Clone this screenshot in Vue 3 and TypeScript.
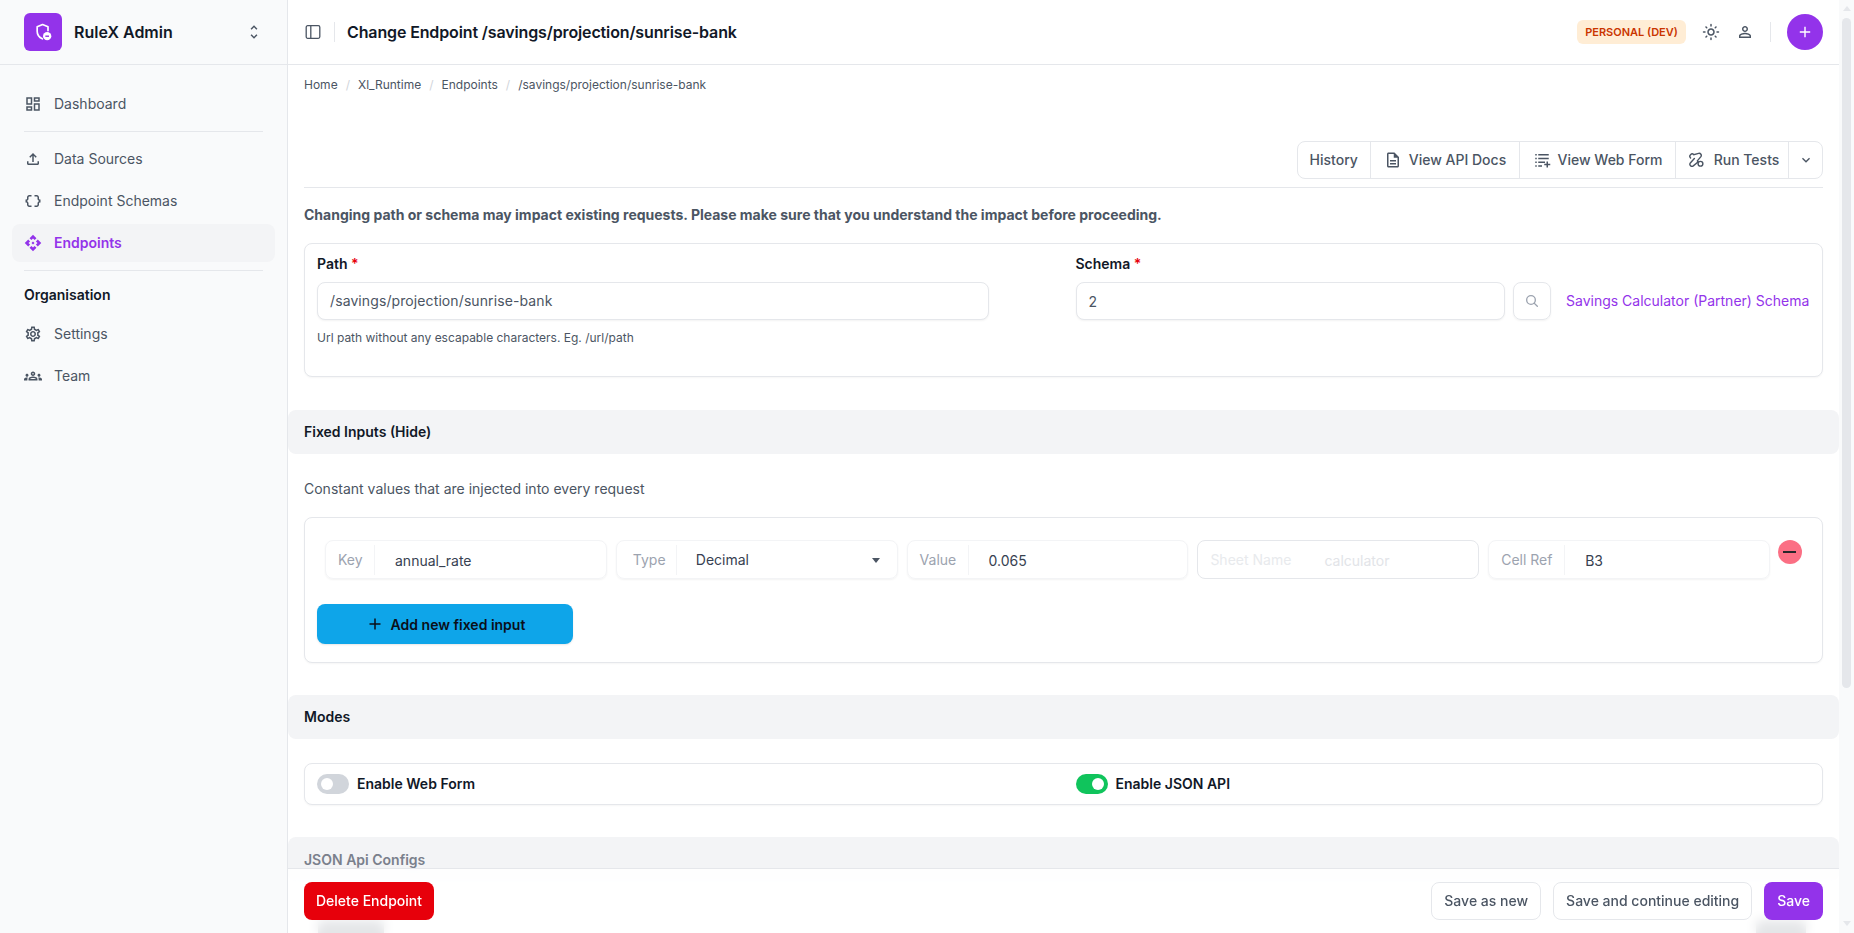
<script setup lang="ts">
interface NavItem { label: string; icon: string; active?: boolean }

const icons: Record<string, string> = {
  dashboard: 'M19 5v2h-4V5h4M9 5v6H5V5h4m10 8v6h-4v-6h4M9 17v2H5v-2h4M21 3h-8v6h8V3zM11 3H3v10h8V3zm10 8h-8v10h8V11zm-10 4H3v6h8v-6z',
  upload: 'M18 15v3H6v-3H4v3c0 1.1.9 2 2 2h12c1.1 0 2-.9 2-2v-3h-2zM7 9l1.41 1.41L11 7.83V16h2V7.83l2.59 2.58L17 9l-5-5-5 5z',
  braces: 'M4 7v2c0 .55-.45 1-1 1H2v4h1c.55 0 1 .45 1 1v2c0 1.65 1.35 3 3 3h3v-2H7c-.55 0-1-.45-1-1v-2c0-1.3-.84-2.42-2-2.83v-.34C5.16 11.42 6 10.3 6 9V7c0-.55.45-1 1-1h3V4H7C5.35 4 4 5.35 4 7zM21 10c-.55 0-1-.45-1-1V7c0-1.65-1.35-3-3-3h-3v2h3c.55 0 1 .45 1 1v2c0 1.3.84 2.42 2 2.83v.34c-1.16.41-2 1.52-2 2.83v2c0 .55-.45 1-1 1h-3v2h3c1.65 0 3-1.35 3-3v-2c0-.55.45-1 1-1h1v-4h-1z',
  api: 'M14 12l-2 2-2-2 2-2 2 2zm-2-6l2.12 2.12 2.5-2.5L12 1 7.38 5.62l2.5 2.5L12 6zm-6 6l2.12-2.12-2.5-2.5L1 12l4.62 4.62 2.5-2.5L6 12zm12 0l-2.12 2.12 2.5 2.5L23 12l-4.62-4.62-2.5 2.5L18 12zm-6 6l-2.12-2.12-2.5 2.5L12 23l4.62-4.62-2.5-2.5L12 18z',
  settings: 'M19.43 12.98c.04-.32.07-.64.07-.98 0-.34-.03-.66-.07-.98l2.11-1.65c.19-.15.24-.42.12-.64l-2-3.46c-.09-.16-.26-.25-.44-.25-.06 0-.12.01-.17.03l-2.49 1c-.52-.4-1.08-.73-1.69-.98l-.38-2.65C14.46 2.18 14.25 2 14 2h-4c-.25 0-.46.18-.49.42l-.38 2.65c-.61.25-1.17.59-1.69.98l-2.49-1c-.06-.02-.12-.03-.18-.03-.17 0-.34.09-.43.25l-2 3.46c-.13.22-.07.49.12.64l2.11 1.65c-.04.32-.07.65-.07.98 0 .33.03.66.07.98l-2.11 1.65c-.19.15-.24.42-.12.64l2 3.46c.09.16.26.25.44.25.06 0 .12-.01.17-.03l2.49-1c.52.4 1.08.73 1.69.98l.38 2.65c.03.24.24.42.49.42h4c.25 0 .46-.18.49-.42l.38-2.65c.61-.25 1.17-.59 1.69-.98l2.49 1c.06.02.12.03.18.03.17 0 .34-.09.43-.25l2-3.46c.12-.22.07-.49-.12-.64l-2.11-1.65zm-1.98-1.71c.04.31.05.52.05.73 0 .21-.02.43-.05.73l-.14 1.13.89.7 1.08.84-.7 1.21-1.27-.51-1.04-.42-.9.68c-.43.32-.84.56-1.25.73l-1.06.43-.16 1.13-.2 1.35h-1.4l-.19-1.35-.16-1.13-1.06-.43c-.43-.18-.83-.41-1.23-.71l-.91-.7-1.06.43-1.27.51-.7-1.21 1.08-.84.89-.7-.14-1.13c-.03-.31-.05-.54-.05-.74s.02-.43.05-.73l.14-1.13-.89-.7-1.08-.84.7-1.21 1.27.51 1.04.42.9-.68c.43-.32.84-.56 1.25-.73l1.06-.43.16-1.13.2-1.35h1.39l.19 1.35.16 1.13 1.06.43c.43.18.83.41 1.23.71l.91.7 1.06-.43 1.27-.51.7 1.21-1.07.85-.89.7.14 1.13zM12 8c-2.21 0-4 1.79-4 4s1.79 4 4 4 4-1.79 4-4-1.79-4-4-4zm0 6c-1.1 0-2-.9-2-2s.9-2 2-2 2 .9 2 2-.9 2-2 2z',
  groups: 'M4 13c1.1 0 2-.9 2-2s-.9-2-2-2-2 .9-2 2 .9 2 2 2zm1.13 1.1c-.37-.06-.74-.1-1.13-.1-.99 0-1.93.21-2.78.58C.48 14.9 0 15.62 0 16.43V18h4.5v-1.61c0-.83.23-1.61.63-2.29zM20 13c1.1 0 2-.9 2-2s-.9-2-2-2-2 .9-2 2 .9 2 2 2zm4 3.43c0-.81-.48-1.53-1.22-1.85-.85-.37-1.79-.58-2.78-.58-.39 0-.76.04-1.13.1.4.68.63 1.46.63 2.29V18H24v-1.57zm-7.76-2.78c-1.17-.52-2.61-.9-4.24-.9-1.63 0-3.07.39-4.24.9C6.68 14.13 6 15.21 6 16.39V18h12v-1.61c0-1.18-.68-2.26-1.76-2.74zM8.07 16c.09-.23.13-.39.91-.69.97-.38 1.99-.56 3.02-.56s2.05.18 3.02.56c.77.3.81.46.91.69H8.07zM12 8c.55 0 1 .45 1 1s-.45 1-1 1-1-.45-1-1 .45-1 1-1m0-2c-1.66 0-3 1.34-3 3s1.34 3 3 3 3-1.34 3-3-1.34-3-3-3z',
  unfold: 'M12 5.83 15.17 9l1.41-1.41L12 3 7.41 7.59 8.83 9 12 5.83zm0 12.34L8.83 15l-1.41 1.41L12 21l4.59-4.59L15.17 15 12 18.17z',
  sun: 'M12 9c1.65 0 3 1.35 3 3s-1.35 3-3 3-3-1.35-3-3 1.35-3 3-3m0-2c-2.76 0-5 2.24-5 5s2.24 5 5 5 5-2.24 5-5-2.24-5-5-5zM2 13h2c.55 0 1-.45 1-1s-.45-1-1-1H2c-.55 0-1 .45-1 1s.45 1 1 1zm18 0h2c.55 0 1-.45 1-1s-.45-1-1-1h-2c-.55 0-1 .45-1 1s.45 1 1 1zM11 2v2c0 .55.45 1 1 1s1-.45 1-1V2c0-.55-.45-1-1-1s-1 .45-1 1zm0 18v2c0 .55.45 1 1 1s1-.45 1-1v-2c0-.55-.45-1-1-1s-1 .45-1 1zM5.99 4.58c-.39-.39-1.03-.39-1.41 0-.39.39-.39 1.03 0 1.41l1.06 1.06c.39.39 1.03.39 1.41 0s.39-1.03 0-1.41L5.99 4.58zm12.37 12.37c-.39-.39-1.03-.39-1.41 0-.39.39-.39 1.03 0 1.41l1.06 1.06c.39.39 1.03.39 1.41 0 .39-.39.39-1.03 0-1.41l-1.06-1.06zm1.06-10.96c.39-.39.39-1.03 0-1.41-.39-.39-1.03-.39-1.41 0l-1.06 1.06c-.39.39-.39 1.03 0 1.41s1.03.39 1.41 0l1.06-1.06zM7.05 18.36c.39-.39.39-1.03 0-1.41-.39-.39-1.03-.39-1.41 0l-1.06 1.06c-.39.39-.39 1.03 0 1.41s1.03.39 1.41 0l1.06-1.06z',
  person: 'M12 5.9c1.16 0 2.1.94 2.1 2.1s-.94 2.1-2.1 2.1S9.9 9.16 9.9 8s.94-2.1 2.1-2.1m0 9c2.97 0 6.1 1.46 6.1 2.1v1.1H5.9V17c0-.64 3.13-2.1 6.1-2.1M12 4C9.79 4 8 5.79 8 8s1.79 4 4 4 4-1.79 4-4-1.79-4-4-4zm0 9c-2.67 0-8 1.34-8 4v3h16v-3c0-2.66-5.33-4-8-4z',
  doc: 'M8 16h8v2H8zm0-4h8v2H8zm6-10H6c-1.1 0-2 .9-2 2v16c0 1.1.89 2 1.99 2H18c1.1 0 2-.9 2-2V8l-6-6zm4 18H6V4h7v5h5v11z',
  chevron: 'M16.59 8.59 12 13.17 7.41 8.59 6 10l6 6 6-6z',
  form: 'M3 4h2v2H3zm4 0h14v2H7zM3 9h2v2H3zm4 0h14v2H7zM3 14h2v2H3zm4 0h9v2H7zM3 19h2v2H3zm4 0h5v2H7zM18 14h2v3h3v2h-3v3h-2v-3h-3v-2h3z'
}

const mainNav: NavItem[] = [
  { label: 'Data Sources', icon: 'upload' },
  { label: 'Endpoint Schemas', icon: 'braces' },
  { label: 'Endpoints', icon: 'api', active: true }
]
const orgNav: NavItem[] = [
  { label: 'Settings', icon: 'settings' },
  { label: 'Team', icon: 'groups' }
]
const crumbs = ['Home', 'Xl_Runtime', 'Endpoints', '/savings/projection/sunrise-bank']
const fixedInputs = [
  { label: 'Key', value: 'annual_rate', labelW: 'w-key' },
  { label: 'Type', value: 'Decimal', labelW: 'w-type', select: true },
  { label: 'Value', value: '0.065', labelW: 'w-value' },
  { label: 'Sheet Name', value: 'calculator', labelW: 'w-sheet', disabled: true },
  { label: 'Cell Ref', value: 'B3', labelW: 'w-cell' }
]
</script>

<template>
  <div class="app">
    <aside class="sidebar">
      <div class="brand">
        <div class="logo">
          <svg viewBox="0 0 24 24" width="20" height="20">
            <path d="M18 10.5V5.8L11.5 3 5 5.8v5.4c0 4.3 2.8 7.6 6.2 9" fill="none" stroke="#fff" stroke-width="2" stroke-linecap="round" stroke-linejoin="round" />
            <circle cx="17" cy="17" r="5" fill="#fff" />
            <rect x="14.8" y="16.2" width="4.4" height="1.7" fill="#9333ea" />
          </svg>
        </div>
        <span class="brand-name">RuleX Admin</span>
        <svg class="brand-caret" viewBox="0 0 24 24" width="18" height="18"><path :d="icons.unfold" /></svg>
      </div>
      <nav class="nav">
        <a class="nav-item">
          <svg viewBox="0 0 24 24" width="18" height="18"><path :d="icons.dashboard" /></svg>
          <span>Dashboard</span>
        </a>
        <div class="nav-sep" />
        <div class="nav-list">
          <a v-for="item in mainNav" :key="item.label" class="nav-item" :class="{ active: item.active }">
            <svg viewBox="0 0 24 24" width="18" height="18"><path :d="icons[item.icon]" /></svg>
            <span>{{ item.label }}</span>
          </a>
        </div>
        <div class="nav-sep" />
        <div class="nav-title">Organisation</div>
        <div class="nav-list">
          <a v-for="item in orgNav" :key="item.label" class="nav-item">
            <svg viewBox="0 0 24 24" width="18" height="18"><path :d="icons[item.icon]" /></svg>
            <span>{{ item.label }}</span>
          </a>
        </div>
      </nav>
    </aside>

    <main class="main">
      <header class="topbar">
        <svg class="toggle" viewBox="0 0 16 16" width="16" height="16" fill="none" stroke="#4b5563" stroke-width="1.3">
          <rect x="1.2" y="1.7" width="13.6" height="12.6" rx="1.5" />
          <path d="M5.8 1.7v12.6" />
        </svg>
        <span class="vline" />
        <h1 class="page-title">Change Endpoint /savings/projection/sunrise-bank</h1>
        <div class="top-actions">
          <span class="badge">PERSONAL (DEV)</span>
          <svg class="sun" viewBox="0 0 24 24" width="18" height="18"><path :d="icons.sun" /></svg>
          <svg class="person" viewBox="0 0 24 24" width="18" height="18"><path :d="icons.person" /></svg>
          <span class="vline" />
          <button class="fab" type="button">
            <svg viewBox="0 0 16 16" width="16" height="16" fill="none" stroke="#fff" stroke-width="1.4"><path d="M8 2.8v10.4M2.8 8h10.4" /></svg>
          </button>
        </div>
      </header>

      <div class="content">
        <div class="crumbs">
          <template v-for="(c, i) in crumbs" :key="c">
            <span v-if="i" class="crumb-sep">/</span>
            <span>{{ c }}</span>
          </template>
        </div>

        <div class="toolbar-row">
          <div class="toolbar">
            <button class="tool t-history" type="button">History</button>
            <button class="tool t-docs" type="button">
              <svg viewBox="0 0 24 24" width="18" height="18"><path :d="icons.doc" /></svg>View API Docs
            </button>
            <button class="tool t-form" type="button">
              <svg viewBox="0 0 24 24" width="18" height="18"><path :d="icons.form" /></svg>View Web Form
            </button>
            <button class="tool t-tests" type="button">
              <svg viewBox="0 0 24 24" width="17" height="17" fill="none" stroke="#4b5563" stroke-width="2" stroke-linecap="round">
                <path d="M14.5 15.2 7.5 21a3 3 0 0 1-4.2-4.2L9 10.5M3.6 9.8A3.2 3.2 0 0 1 8.2 5.2L15 3.4a3 3 0 0 1 3.2 4.6l-5 6" />
                <circle cx="17.6" cy="18" r="3.4" />
              </svg>Run Tests
            </button>
            <button class="tool t-more" type="button">
              <svg viewBox="0 0 24 24" width="16" height="16"><path :d="icons.chevron" /></svg>
            </button>
          </div>
        </div>
        <hr class="rule" />

        <p class="warning">Changing path or schema may impact existing requests. Please make sure that you understand the impact before proceeding.</p>

        <section class="card card-paths">
          <div class="field">
            <label class="label">Path <span class="req">*</span></label>
            <div class="input path-input">/savings/projection/sunrise-bank</div>
            <p class="help">Url path without any escapable characters. Eg. /url/path</p>
          </div>
          <div class="field">
            <label class="label">Schema <span class="req">*</span></label>
            <div class="schema-row">
              <div class="input schema-input">2</div>
              <button class="search" type="button">
                <svg viewBox="0 0 24 24" width="16" height="16" fill="none" stroke="#9ca3af" stroke-width="2" stroke-linecap="round"><circle cx="10.5" cy="10.5" r="6.5" /><path d="m20 20-4.8-4.8" /></svg>
              </button>
              <a class="schema-link">Savings Calculator (Partner) Schema</a>
            </div>
          </div>
        </section>

        <div class="bar bar-fixed">Fixed Inputs (Hide)</div>
        <p class="desc">Constant values that are injected into every request</p>

        <section class="card card-fixed">
          <div class="fixed-row">
            <div v-for="f in fixedInputs" :key="f.label" class="fi-group" :class="{ disabled: f.disabled }">
              <span class="fi-label" :class="f.labelW">{{ f.label }}</span>
              <span class="fi-value" :class="{ sel: f.select }">{{ f.value }}</span>
              <span v-if="f.select" class="caret" />
            </div>
            <button class="remove" type="button"><span /></button>
          </div>
          <button class="add" type="button">
            <svg viewBox="0 0 16 16" width="16" height="16" fill="none" stroke="#0b0f19" stroke-width="1.5"><path d="M8 2.5v11M2.5 8h11" /></svg>
            Add new fixed input
          </button>
        </section>

        <div class="bar bar-modes">Modes</div>
        <section class="card card-modes">
          <div class="mode">
            <span class="switch"><span class="knob" /></span>
            <span class="mode-label">Enable Web Form</span>
          </div>
          <div class="mode">
            <span class="switch on"><span class="knob" /></span>
            <span class="mode-label">Enable JSON API</span>
          </div>
        </section>

        <div class="bar bar-json">JSON Api Configs</div>
        <section class="card card-json">
          <span class="json-key" />
          <span class="json-btn" />
        </section>
      </div>

      <footer class="footer">
        <button class="btn danger" type="button">Delete Endpoint</button>
        <div class="footer-right">
          <button class="btn ghost" type="button">Save as new</button>
          <button class="btn ghost" type="button">Save and continue editing</button>
          <button class="btn primary" type="button">Save</button>
        </div>
      </footer>
    </main>

    <div class="scrollbar">
      <span class="sb-up" />
      <span class="sb-thumb" />
      <span class="sb-down" />
    </div>
  </div>
</template>

<style>
html, body { margin: 0; height: 100%; overflow: hidden; background: #fff; }
</style>

<style scoped>
* { box-sizing: border-box; }
.app {
  display: flex;
  height: 100vh;
  font-family: Inter, "Noto Sans", sans-serif;
  font-size: 14px;
  color: #4b5563;
}
button { font: inherit; color: inherit; background: none; border: 0; padding: 0; }
svg { flex: none; display: block; }
p, h1 { margin: 0; }

/* sidebar */
.sidebar { width: 288px; flex: none; background: #f9fafb; border-right: 1px solid #e5e7eb; }
.brand { height: 65px; display: flex; align-items: center; padding: 0 24px; border-bottom: 1px solid #e5e7eb; }
.logo { width: 38px; height: 38px; border-radius: 6px; background: #9333ea; display: flex; align-items: center; justify-content: center; }
.brand-name { margin-left: 12px; font-size: 16px; font-weight: 600; color: #111827; }
.brand-caret { margin-left: auto; fill: #4b5563; }
.nav { padding: 20px 12px; }
.nav-list { display: flex; flex-direction: column; gap: 4px; }
.nav-item { height: 38px; display: flex; align-items: center; gap: 12px; padding: 0 12px; border-radius: 8px; color: #4b5563; fill: #4b5563; }
.nav-item span { padding-bottom: 1px; }
.nav-item.active { background: #f3f4f6; color: #9333ea; fill: #9333ea; font-weight: 600; }
.nav-sep { height: 1px; background: #e5e7eb; margin: 8px 12px; }
.nav-title { margin: 14px 12px 10px; font-weight: 600; line-height: 20px; color: #111827; }

/* main */
.main { flex: 1; min-width: 0; height: 100vh; overflow-y: auto; scrollbar-width: none; }
.topbar {
  position: sticky; top: 0; z-index: 3;
  height: 65px; display: flex; align-items: center;
  padding: 0 16px 0 17px; background: #fff; border-bottom: 1px solid #e5e7eb;
}
.toggle { margin-right: 13px; }
.vline { width: 1px; height: 20px; background: #e5e7eb; flex: none; }
.page-title { margin-left: 12px; font-size: 16px; font-weight: 600; letter-spacing: -.13px; color: #111827; }
.top-actions { margin-left: auto; display: flex; align-items: center; }
.badge { height: 24px; width: 109px; display: flex; align-items: center; justify-content: center; border-radius: 6px; background: #ffedd5; color: #ca3500; font-size: 11px; font-weight: 600; }
.sun { margin-left: 16px; fill: #4b5563; }
.person { margin-left: 16px; fill: #4b5563; }
.top-actions .vline { margin-left: 16px; }
.fab { margin-left: 16px; width: 36px; height: 36px; border-radius: 50%; background: #9333ea; display: flex; align-items: center; justify-content: center; }

.content { padding: 0 16px; }
.crumbs { height: 38px; padding-top: 11px; display: flex; align-items: flex-start; font-size: 12px; line-height: 18px; color: #4b5563; }
.crumb-sep { margin: 0 8px; color: #d1d5db; }

.toolbar-row { display: flex; justify-content: flex-end; margin-top: 38px; }
.toolbar { display: flex; height: 38px; border: 1px solid #e5e7eb; border-radius: 8px; background: #fff; }
.tool { display: flex; align-items: center; justify-content: center; gap: 7px; padding-bottom: 1px; font-weight: 500; color: #4b5563; fill: #4b5563; border-left: 1px solid #e5e7eb; height: 100%; }
.tool:first-child { border-left: 0; }
.t-history { width: 72.5px; }
.t-docs { width: 149px; }
.t-form { width: 156px; }
.t-tests { width: 113px; gap: 9px; padding-left: 3px; }
.t-more { width: 34px; }
.rule { border: 0; border-top: 1px solid #e5e7eb; margin: 8px 0 0; }
.warning { margin-top: 17px; line-height: 20px; font-weight: 700; color: #4b5563; }

.card { border: 1px solid #e5e7eb; border-radius: 8px; background: #fff; box-shadow: 0 1px 2px rgba(0, 0, 0, .04); }
.card-paths { margin-top: 18px; height: 134px; padding: 10px 12px; display: grid; grid-template-columns: 672px 1fr; column-gap: 86.5px; }
.label { display: block; font-weight: 600; line-height: 20px; color: #111827; }
.req { color: #e7000b; }
.input { margin-top: 8px; height: 38px; display: flex; align-items: center; padding: 0 12px; border: 1px solid #e5e7eb; border-radius: 8px; background: #fff; color: #4b5563; box-shadow: 0 1px 2px rgba(0, 0, 0, .05); }
.path-input { letter-spacing: .1px; padding-bottom: 1px; }
.help { margin-top: 10px; font-size: 12px; line-height: 16px; color: #4b5563; }
.schema-row { display: flex; align-items: flex-start; }
.schema-input { width: 429px; flex: none; }
.search { margin: 8px 0 0 8px; width: 38px; height: 38px; flex: none; display: flex; align-items: center; justify-content: center; border: 1px solid #e5e7eb; border-radius: 8px; box-shadow: 0 1px 2px rgba(0, 0, 0, .05); }
.schema-link { margin: 8px 0 0 15.5px; line-height: 38px; color: #9333ea; white-space: nowrap; }

.bar { margin: 33px -16px 0; height: 44px; padding: 0 16px; display: flex; align-items: center; background: #f3f4f6; border-radius: 8px; font-weight: 600; color: #111827; }
.bar-fixed, .bar-modes { padding-bottom: 1px; }
.bar-modes, .bar-json { margin-top: 32px; }
.bar-json { color: #7a808c; }
.desc { margin-top: 25px; line-height: 20px; color: #4b5563; }

.card-fixed { margin-top: 18px; height: 146px; padding: 22px 12px 0; }
.fixed-row { display: flex; align-items: flex-start; padding: 0 8px 0 8px; gap: 9px; }
.fi-group { flex: 1; min-width: 0; height: 39px; display: flex; align-items: center; border: 1px solid #f3f4f6; border-radius: 8px; box-shadow: 0 1px 2px rgba(0, 0, 0, .05); padding-left: 12px; position: relative; }
.fi-label { color: #9ca3af; height: 30px; line-height: 30px; border-right: 1px solid #f3f4f6; flex: none; }
.w-key { width: 37px; }
.w-type { width: 44px; margin-left: 4px; }
.w-value { width: 49px; }
.w-sheet { width: 94px; border-right: 0; }
.w-cell { width: 64px; }
.fi-value { margin-left: 20px; color: #374151; padding-top: 1px; }
.fi-value.sel { margin-left: 19px; padding-top: 0; }
.caret { position: absolute; right: 17px; top: 17px; border: 4px solid transparent; border-top: 5px solid #4b5563; border-bottom: 0; }
.fi-group.disabled { border-color: #e5e7eb; box-shadow: none; }
.fi-group.disabled .fi-label { color: #e8eaed; }
.fi-group.disabled .fi-value { color: #e2e4e8; }
.remove { width: 24px; height: 24px; flex: none; margin-left: -1px; border-radius: 50%; background: #fb6f84; display: flex; align-items: center; justify-content: center; }
.remove span { width: 13px; height: 2px; background: #27272a; }
.add { margin-top: 25px; width: 256px; height: 40px; padding-left: 2px; display: flex; align-items: center; justify-content: center; gap: 8px; background: #0ea5e9; border-radius: 8px; font-weight: 600; color: #0b0f19; box-shadow: 0 1px 2px rgba(0, 0, 0, .1); }

.card-modes { margin-top: 24px; height: 42px; padding: 0 12px; display: grid; grid-template-columns: 758.5px 1fr; align-items: center; }
.mode { display: flex; align-items: center; gap: 8px; }
.mode-label { font-weight: 600; color: #111827; padding-bottom: 2px; }
.switch { width: 32px; height: 20px; border-radius: 10px; background: #d1d5db; position: relative; flex: none; }
.switch.on { background: #10c45c; }
.knob { position: absolute; top: 4px; left: 4px; width: 12px; height: 12px; border-radius: 50%; background: #fff; }
.switch.on .knob { left: 16px; }

.card-json { margin-top: 24px; height: 291px; padding: 15px 17px 0 14px; display: flex; align-items: flex-start; justify-content: space-between; border: 0; box-shadow: none; }
.json-key { width: 66px; height: 20px; background: #4b5563; border-radius: 3px; }
.json-btn { width: 50px; height: 24px; background: #4b5563; border-radius: 3px; }

/* footer */
.footer {
  position: sticky; bottom: 0; z-index: 2;
  height: 65px; display: flex; align-items: center; justify-content: space-between;
  padding: 0 16px; border-top: 1px solid #e5e7eb;
  background: rgba(255, 255, 255, .85); backdrop-filter: blur(6px);
}
.footer-right { display: flex; gap: 12px; }
.btn { height: 38px; border-radius: 8px; padding: 0 12px 1px; font-weight: 500; white-space: nowrap; }
.danger { background: #e7000b; color: #fff; }
.ghost { background: #fff; border: 1px solid #e5e7eb; color: #4b5563; }
.primary { background: #9333ea; color: #fff; padding: 0 13px 1px; }

/* window scrollbar */
.scrollbar { width: 15px; flex: none; height: 100vh; background: #f9fafb; display: flex; flex-direction: column; align-items: center; }
.sb-up { margin-top: 6px; border: 4.5px solid transparent; border-bottom: 5px solid #e5e7eb; border-top: 0; }
.sb-thumb { margin-top: 7px; width: 9px; height: 670px; border-radius: 4.5px; background: #e5e7eb; }
.sb-down { margin-top: auto; margin-bottom: 7px; border: 4.5px solid transparent; border-top: 5px solid #e5e7eb; border-bottom: 0; }
</style>
